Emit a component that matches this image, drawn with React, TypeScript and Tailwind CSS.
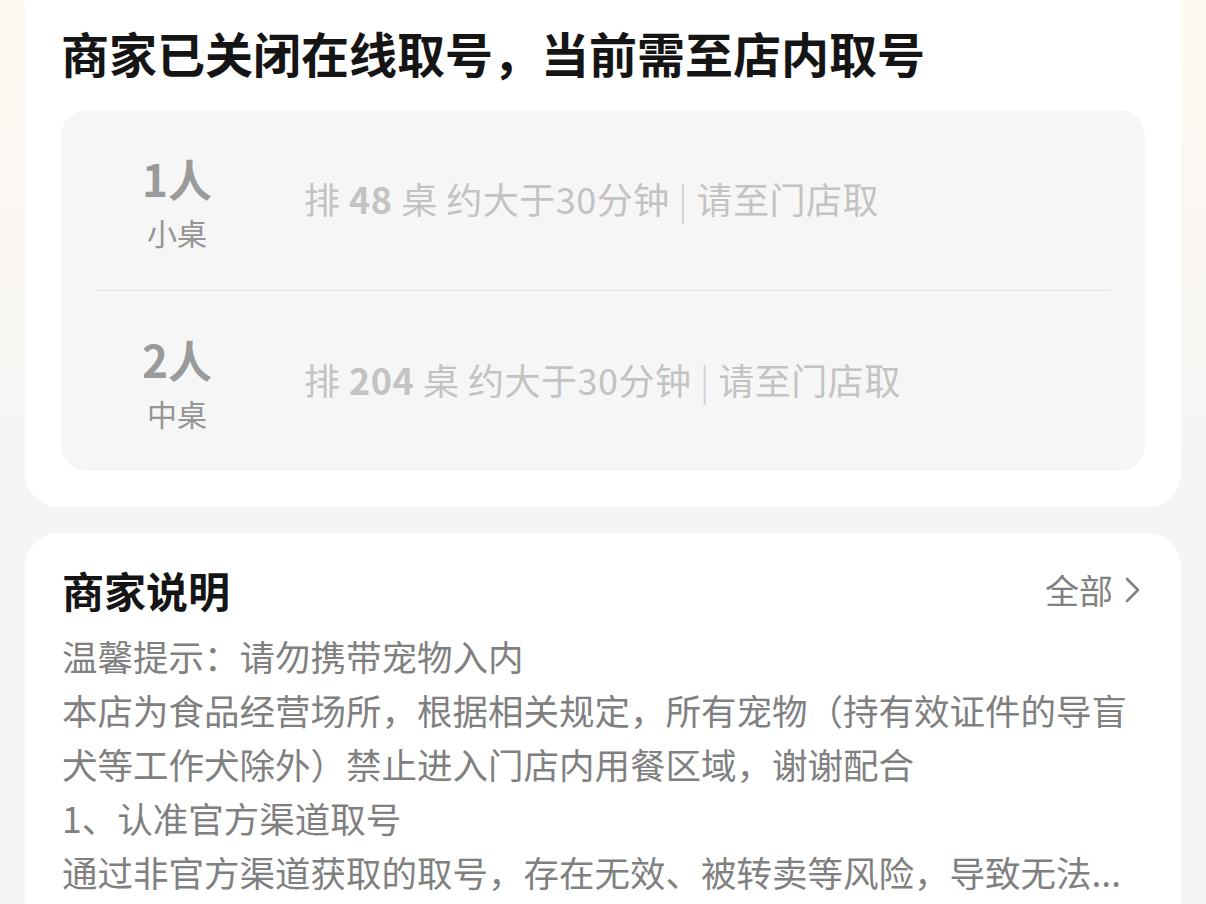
import React from "react";

const FONT = { fontFamily: "'Noto Sans CJK SC', 'Noto Sans', sans-serif" };

type Table = { people: string; size: string; queue: string };

const tables: Table[] = [
  { people: "1人", size: "小桌", queue: "48" },
  { people: "2人", size: "中桌", queue: "204" },
];

function QueueRow({ t }: { t: Table }) {
  return (
    <div className="flex h-[180px] items-center">
      <div className="flex w-[162px] flex-col items-center pt-[6px]">
        <div className="text-[44px] font-bold leading-[48px] text-[#9a9a9a]">{t.people}</div>
        <div className="mt-[10px] text-[30px] leading-[40px] text-[#959595]">{t.size}</div>
      </div>
      <div className="ml-[46px] whitespace-nowrap pb-[5px] text-[36px] leading-[48px] tracking-[0.5px] text-[#c3c3c3]">
        排 <span className="font-bold">{t.queue}</span> 桌 约大于30分钟 <span className="font-light text-[#cfcfcf]">|</span> 请至门店取
      </div>
    </div>
  );
}

function Chevron() {
  return (
    <svg width="18" height="30" viewBox="0 0 18 30" fill="none" className="ml-[10px]">
      <polyline points="4,4 15,15 4,26" stroke="#808080" strokeWidth="2.6" strokeLinecap="round" strokeLinejoin="round" />
    </svg>
  );
}

export default function App() {
  return (
    <div
      className="min-h-[904px] w-[1206px] overflow-hidden bg-[linear-gradient(180deg,#fdf9f3_0px,#faf7f2_250px,#f5f5f5_470px,#f5f5f5_100%)] px-[25px]"
      style={FONT}
    >
      {/* queue status card */}
      <div className="rounded-b-[34px] bg-white px-[36px] pb-[36px] pt-[21px]">
        <h1 className="text-[48px] font-bold leading-[62px] text-[#151515]">
          商家已关闭在线取号，当前需至店内取号
        </h1>
        <div className="mt-[27px] rounded-[26px] bg-[#f6f6f6] px-[35px]">
          <QueueRow t={tables[0]} />
          <div className="h-px bg-[#e4e4e4]" />
          <QueueRow t={tables[1]} />
        </div>
      </div>

      {/* merchant notes card */}
      <div className="mt-[26px] rounded-t-[34px] bg-white px-[37px] pt-[30px] pb-[40px]">
        <div className="flex items-center justify-between">
          <h2 className="text-[42px] font-bold leading-[54px] text-[#151515]">商家说明</h2>
          <div className="flex items-center pr-[3px] text-[34px] leading-[54px] text-[#808080]">
            全部
            <Chevron />
          </div>
        </div>
        <div className="mt-[12px] text-[35.5px] leading-[54px] text-[#808080]">
          <p>温馨提示：请勿携带宠物入内</p>
          <p>本店为食品经营场所，根据相关规定，所有宠物（持有效证件的导盲犬等工作犬除外）禁止进入门店内用餐区域，谢谢配合</p>
          <p>1、认准官方渠道取号</p>
          <p className="whitespace-nowrap">通过非官方渠道获取的取号，存在无效、被转卖等风险，导致无法...</p>
        </div>
      </div>
    </div>
  );
}
